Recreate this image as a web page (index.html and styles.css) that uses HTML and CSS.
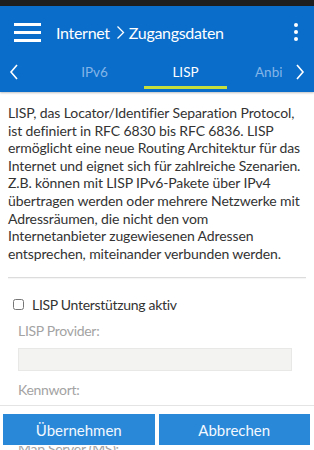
FILE: index.html
```html
<!DOCTYPE html>
<html lang="de">
<head>
    <meta charset="UTF-8">
    <meta name="viewport" content="width=device-width, initial-scale=1.0">
    <title>Internet - Zugangsdaten</title>
    <link rel="stylesheet" href="styles.css">
</head>
<body>
    <div class="statusbar"></div>
    <header class="appbar">
        <div class="toolbar">
            <button class="menu-button" aria-label="Menü">
                <span></span><span></span><span></span>
            </button>
            <h1 class="title">
                Internet
                <svg class="crumb" width="9" height="15" viewBox="0 0 9 15"><path d="M1.5 1.5 L7.5 7.5 L1.5 13.5" fill="none" stroke="#fff" stroke-width="1.3"/></svg>
                Zugangsdaten
            </h1>
            <button class="more-button" aria-label="Mehr">
                <span></span><span></span><span></span>
            </button>
        </div>
        <nav class="tabs">
            <button class="tab-arrow" aria-label="Zurück">
                <svg width="10" height="18" viewBox="0 0 10 18"><path d="M8 2 L2 9 L8 16" fill="none" stroke="#fff" stroke-width="1.6"/></svg>
            </button>
            <div class="tab-strip">
                <a class="tab">IPv6</a>
                <a class="tab active">LISP</a>
                <a class="tab next">Anbieter</a>
            </div>
            <button class="tab-arrow right" aria-label="Weiter">
                <svg width="10" height="18" viewBox="0 0 10 18"><path d="M2 2 L8 9 L2 16" fill="none" stroke="#fff" stroke-width="1.6"/></svg>
            </button>
        </nav>
    </header>

    <main class="content">
        <p class="intro">LISP, das Locator/Identifier Separation Protocol, ist definiert in RFC 6830 bis RFC 6836. LISP ermöglicht eine neue Routing Architektur für das Internet und eignet sich für zahlreiche Szenarien. Z.B. können mit LISP IPv6-Pakete über IPv4 übertragen werden oder mehrere Netzwerke mit Adressräumen, die nicht den vom Internetanbieter zugewiesenen Adressen entsprechen, miteinander verbunden werden.</p>
        <hr class="divider">
        <label class="check-row">
            <input type="checkbox" id="lisp-active"> LISP Unterstützung aktiv
        </label>
        <div class="field">
            <label for="provider">LISP Provider:</label>
            <input type="text" id="provider" disabled>
        </div>
        <div class="field">
            <label for="password">Kennwort:</label>
            <input type="password" id="password" disabled>
        </div>
        <div class="field">
            <label for="map-server">Map Server (MS):</label>
            <input type="text" id="map-server" disabled>
        </div>
    </main>

    <footer class="actions">
        <button class="action">Übernehmen</button>
        <button class="action">Abbrechen</button>
    </footer>
</body>
</html>
```

FILE: styles.css
```css
body {
    margin: 0;
    font-family: Lato, "Open Sans", sans-serif;
    color: #333;
    background: #fff;
    overflow: hidden;
    height: 450px;
}
button {
    font-family: inherit;
    border: none;
    background: none;
    padding: 0;
    cursor: pointer;
}
.statusbar {
    height: 6px;
    background: #1e1e1e;
}
.appbar {
    background: #0b6dca;
    color: white;
    border-bottom: 3px solid #0b6dca;
    box-shadow: 0 1px 2px rgba(0, 0, 0, 0.25);
}
.toolbar {
    display: flex;
    align-items: center;
    height: 52px;
    padding: 0 14px;
}
.menu-button {
    display: flex;
    flex-direction: column;
    gap: 5px;
    width: 27px;
    margin-right: 15px;
}
.menu-button span {
    display: block;
    height: 3px;
    background: white;
}
.title {
    flex: 1;
    margin: 0;
    font-size: 16px;
    letter-spacing: -0.3px;
    font-weight: normal;
    display: flex;
    align-items: center;
    gap: 3px;
}
.crumb {
    margin: 0 1px 0 3px;
}
.more-button {
    display: flex;
    flex-direction: column;
    gap: 3px;
    margin-right: 2px;
}
.more-button span {
    width: 4px;
    height: 4px;
    border-radius: 50%;
    background: white;
}
.tabs {
    display: flex;
    height: 31px;
}
.tab-arrow {
    width: 28px;
    display: flex;
    align-items: center;
    justify-content: center;
    padding-bottom: 3px;
    background: #0b6dca;
}
.tab-arrow.right {
    width: 32px;
    padding-left: 4px;
}
.tab-strip {
    flex: 1;
    display: flex;
    overflow: hidden;
    padding-left: 21px;
}
.tab {
    flex: 0 0 83px;
    margin: 0 4px;
    text-align: center;
    font-size: 13.5px;
    line-height: 28px;
    color: #84b5e8;
    border-bottom: 3px solid transparent;
}
.tab.next {
    text-align: left;
    padding-left: 20px;
}
.tab.active {
    color: white;
    border-bottom-color: #c5df3c;
}
.content {
    padding: 12px 8px 0;
}
.intro {
    margin: 0;
    font-size: 14px;
    letter-spacing: -0.12px;
    line-height: 17.6px;
}
.divider {
    margin: 15px 0 0;
    border: none;
    border-top: 1px solid #dcdcdc;
    box-shadow: 0 1px 1px rgba(0, 0, 0, 0.05);
}
.check-row {
    display: flex;
    align-items: center;
    gap: 8px;
    margin: 18px 0 0 5px;
    font-size: 14px;
    letter-spacing: -0.3px;
}
.check-row input {
    margin: 0;
    width: 11px;
    height: 11px;
}
.field {
    padding: 0 14px 0 10px;
    margin-top: 9px;
}
.field + .field {
    margin-top: 10px;
}
.field label {
    display: block;
    color: #a3a3a3;
    font-size: 14px;
    letter-spacing: -0.3px;
    line-height: 18px;
    margin-bottom: 8px;
}
.field input {
    width: 100%;
    box-sizing: border-box;
    height: 23px;
    border: 1px solid #e8e8e6;
    background: #f3f3f1;
}
.actions {
    position: fixed;
    left: 0;
    right: 0;
    top: 405px;
    display: flex;
    gap: 4px;
    padding: 8px 4px 1px 3px;
    background: white;
    border-top: 1px solid #e4e4e4;
}
.action {
    flex: 1;
    height: 31px;
    background: #2a88d8;
    color: #f2f8ff;
    font-size: 15px;
}
```
